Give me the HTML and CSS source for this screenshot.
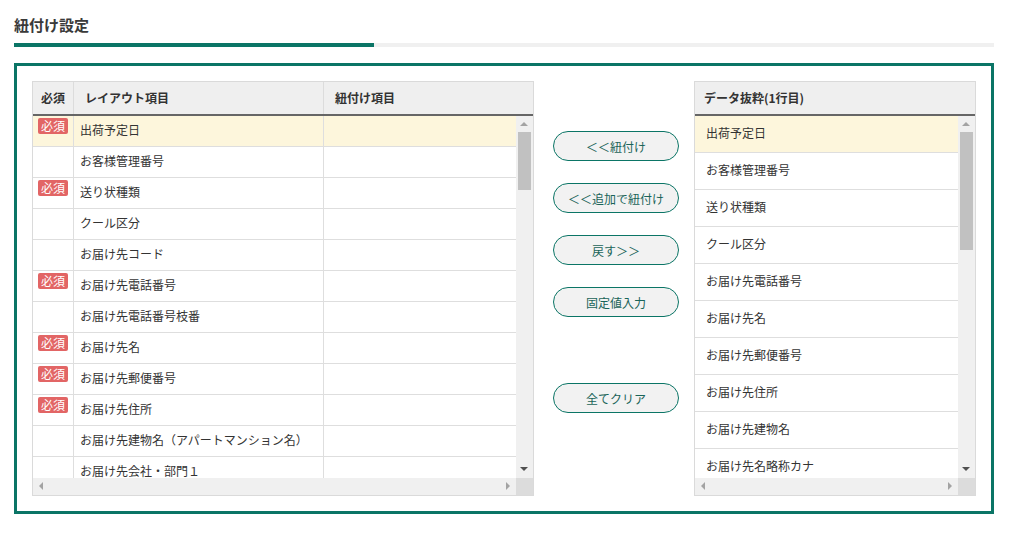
FILE: index.html
```html
<!DOCTYPE html>
<html lang="ja">
<head>
  <meta charset="UTF-8" />
  <title>紐付け設定</title>
  <link rel="stylesheet" href="styles.css">
</head>
<body>
  <div class="page">
    <h2 class="title">紐付け設定</h2>
    <div class="title-bar"><span></span></div>

    <div class="panel">
      <div class="grid-box layout-box">
        <div class="grid-head">
          <div class="c-req">必須</div>
          <div class="c-name">レイアウト項目</div>
          <div class="c-link">紐付け項目</div>
        </div>
        <div class="grid-view">
          <div class="grid-rows">
            <div class="row selected"><div class="c-req"><span class="badge">必須</span></div><div class="c-name">出荷予定日</div><div class="c-link"></div></div>
            <div class="row"><div class="c-req"></div><div class="c-name">お客様管理番号</div><div class="c-link"></div></div>
            <div class="row"><div class="c-req"><span class="badge">必須</span></div><div class="c-name">送り状種類</div><div class="c-link"></div></div>
            <div class="row"><div class="c-req"></div><div class="c-name">クール区分</div><div class="c-link"></div></div>
            <div class="row"><div class="c-req"></div><div class="c-name">お届け先コード</div><div class="c-link"></div></div>
            <div class="row"><div class="c-req"><span class="badge">必須</span></div><div class="c-name">お届け先電話番号</div><div class="c-link"></div></div>
            <div class="row"><div class="c-req"></div><div class="c-name">お届け先電話番号枝番</div><div class="c-link"></div></div>
            <div class="row"><div class="c-req"><span class="badge">必須</span></div><div class="c-name">お届け先名</div><div class="c-link"></div></div>
            <div class="row"><div class="c-req"><span class="badge">必須</span></div><div class="c-name">お届け先郵便番号</div><div class="c-link"></div></div>
            <div class="row"><div class="c-req"><span class="badge">必須</span></div><div class="c-name">お届け先住所</div><div class="c-link"></div></div>
            <div class="row"><div class="c-req"></div><div class="c-name">お届け先建物名（アパートマンション名）</div><div class="c-link"></div></div>
            <div class="row"><div class="c-req"></div><div class="c-name">お届け先会社・部門１</div><div class="c-link"></div></div>
          </div>
          <div class="vscroll">
            <span class="arr up"></span>
            <span class="thumb"></span>
            <span class="arr down"></span>
          </div>
        </div>
        <div class="hscroll">
          <div class="htrack"><span class="arr left"></span><span class="arr right"></span></div>
          <span class="corner"></span>
        </div>
      </div>

      <div class="actions">
        <button class="act-btn">＜＜紐付け</button>
        <button class="act-btn">＜＜追加で紐付け</button>
        <button class="act-btn">戻す＞＞</button>
        <button class="act-btn">固定値入力</button>
        <button class="act-btn clear-btn">全てクリア</button>
      </div>

      <div class="grid-box data-box">
        <div class="grid-head">
          <div class="c-data">データ抜粋(1行目)</div>
        </div>
        <div class="grid-view">
          <div class="grid-rows">
            <div class="row selected"><div class="c-data">出荷予定日</div></div>
            <div class="row"><div class="c-data">お客様管理番号</div></div>
            <div class="row"><div class="c-data">送り状種類</div></div>
            <div class="row"><div class="c-data">クール区分</div></div>
            <div class="row"><div class="c-data">お届け先電話番号</div></div>
            <div class="row"><div class="c-data">お届け先名</div></div>
            <div class="row"><div class="c-data">お届け先郵便番号</div></div>
            <div class="row"><div class="c-data">お届け先住所</div></div>
            <div class="row"><div class="c-data">お届け先建物名</div></div>
            <div class="row"><div class="c-data">お届け先名略称カナ</div></div>
          </div>
          <div class="vscroll">
            <span class="arr up"></span>
            <span class="thumb"></span>
            <span class="arr down"></span>
          </div>
        </div>
        <div class="hscroll">
          <div class="htrack"><span class="arr left"></span><span class="arr right"></span></div>
          <span class="corner"></span>
        </div>
      </div>
    </div>
  </div>
</body>
</html>
```

FILE: styles.css
```css
* {
  box-sizing: border-box;
}

body {
  margin: 0;
  font-family: "Noto Sans CJK JP", "Noto Sans", sans-serif;
  font-size: 12px;
  color: #333;
  background: #fff;
}

.page {
  width: 994px;
  padding: 15px 0 0 14px;
}

.title {
  margin: 0;
  font-size: 15px;
  line-height: 20px;
  font-weight: bold;
  color: #3a3a3a;
}

.title-bar {
  margin-top: 8px;
  height: 4px;
  background: #f0f0f0;
}

.title-bar span {
  display: block;
  width: 360px;
  height: 4px;
  background: #0b7566;
}

.panel {
  margin-top: 16px;
  border: 3px solid #0b7566;
  padding: 15px 15px 15px 15px;
  display: flex;
  align-items: flex-start;
}

/* grids */
.grid-box {
  flex: none;
  border: 1px solid #dadada;
  background: #fff;
}

.layout-box {
  width: 502px;
}

.data-box {
  width: 282px;
  margin-left: 15px;
}

.grid-head {
  display: flex;
  height: 34px;
  background: #efefef;
  border-bottom: 2px solid #666;
  font-weight: bold;
  line-height: 32px;
}

.grid-view {
  display: flex;
  height: 362px;
  overflow: hidden;
}

.grid-rows {
  flex: 1;
  overflow: hidden;
}

.row {
  display: flex;
  border-bottom: 1px solid #dedede;
  background: #fff;
}

.layout-box .row {
  height: 31px;
  line-height: 28px;
}

.data-box .row {
  height: 37px;
  line-height: 34px;
}

.row.selected {
  background: #fdf6dc;
}

.c-req {
  width: 41px;
  flex: none;
  text-align: center;
  border-right: 1px solid #dedede;
}

.grid-head .c-req {
  border-right: 1px solid #dcdcdc;
}

.c-name {
  width: 250px;
  flex: none;
  padding-left: 6px;
  border-right: 1px solid #dedede;
  white-space: nowrap;
  overflow: hidden;
}

.grid-head .c-name {
  padding-left: 11px;
  border-right: 1px solid #dcdcdc;
}

.c-link {
  flex: 1;
  padding-left: 11px;
}

.c-data {
  flex: 1;
  padding-left: 11px;
  white-space: nowrap;
}

.grid-head .c-data {
  padding-left: 9px;
}

.badge {
  display: inline-block;
  margin-top: 2px;
  width: 30px;
  height: 16px;
  line-height: 16px;
  border-radius: 2px;
  background: #e26565;
  color: #fff;
  font-size: 12px;
  vertical-align: top;
}

/* scrollbars */
.vscroll {
  width: 17px;
  flex: none;
  background: #f0f0f0;
  position: relative;
}

.vscroll .thumb {
  position: absolute;
  left: 2px;
  right: 2px;
  top: 16px;
  height: 58px;
  background: #c1c1c1;
}

.data-box .vscroll .thumb {
  height: 118px;
}

.arr {
  position: absolute;
  width: 0;
  height: 0;
}

.arr.up {
  top: 6px;
  left: 4px;
  border-left: 4px solid transparent;
  border-right: 4px solid transparent;
  border-bottom: 4px solid #a3a3a3;
}

.arr.down {
  bottom: 7px;
  left: 4px;
  border-left: 4px solid transparent;
  border-right: 4px solid transparent;
  border-top: 4px solid #505050;
}

.hscroll {
  display: flex;
  height: 17px;
}

.htrack {
  flex: 1;
  background: #f0f0f0;
  position: relative;
}

.arr.left {
  top: 4px;
  left: 6px;
  border-top: 4px solid transparent;
  border-bottom: 4px solid transparent;
  border-right: 4px solid #a3a3a3;
}

.arr.right {
  top: 4px;
  right: 6px;
  border-top: 4px solid transparent;
  border-bottom: 4px solid transparent;
  border-left: 4px solid #a3a3a3;
}

.corner {
  width: 17px;
  flex: none;
  background: #dcdcdc;
}

/* action buttons */
.actions {
  flex: none;
  width: 126px;
  margin-left: 19px;
  margin-top: 50px;
  display: flex;
  flex-direction: column;
  gap: 22px;
}

.act-btn {
  height: 30px;
  border: 1.5px solid #0b7566;
  border-radius: 15px;
  background: #f2f2f2;
  color: #1a6459;
  font-family: inherit;
  font-size: 12px;
  padding: 0;
  cursor: pointer;
}

.clear-btn {
  margin-top: 44px;
}
```
